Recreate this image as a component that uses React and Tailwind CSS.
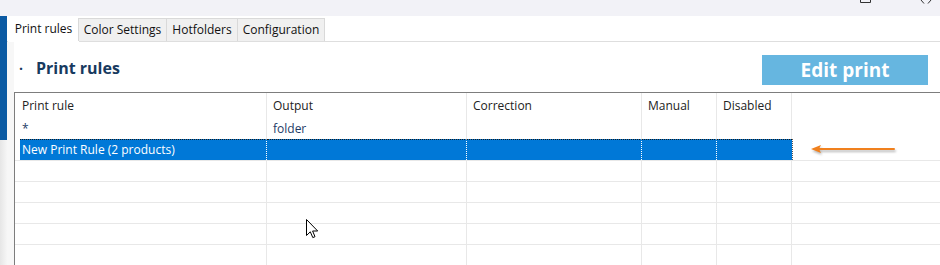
import React from 'react';

const tabs = [
  { label: 'Print rules', width: 'w-[71px]', active: true },
  { label: 'Color Settings', width: 'w-[89px]' },
  { label: 'Hotfolders', width: 'w-[72px]' },
  { label: 'Configuration', width: 'w-[88px]' },
];

const headers = ['Print rule', 'Output', 'Correction', 'Manual', 'Disabled', ''];

const gridCols = 'grid grid-cols-[252px_200px_175px_75px_75px_1fr]';

const Cursor = () => (
  <svg width="13" height="20" viewBox="0 0 13 20" className="absolute left-[306px] top-[219px]">
    <path
      d="M0.5 0.5 L0.5 16.5 L4.3 12.8 L6.8 18.6 L9 17.7 L6.6 12 L11.7 12 Z"
      fill="#fff"
      stroke="#000"
      strokeWidth="1"
    />
  </svg>
);

const Arrow = () => (
  <svg
    width="92"
    height="14"
    viewBox="0 0 92 14"
    className="absolute left-[809px] top-[142px] drop-shadow-[1px_2px_1px_rgba(0,0,0,0.28)]"
  >
    <line x1="9" y1="7" x2="85" y2="7" stroke="#f0801e" strokeWidth="2" strokeLinecap="round" />
    <path d="M2 7 L12 3 L10 7 L12 11 Z" fill="#f0801e" />
  </svg>
);

const App = () => {
  return (
    <div className="relative w-[940px] h-[265px] overflow-hidden bg-white font-['Open_Sans',sans-serif] text-[12px] text-[#222]">
      {/* Window chrome strip */}
      <div className="h-[16px] bg-[#f2f2f7] flex items-start justify-end">
        <svg width="12" height="4" viewBox="0 0 12 4" className="mr-[48px]">
          <path d="M0.5 0 L0.5 2.5 L10.5 2.5 L10.5 0" fill="none" stroke="#333" strokeWidth="1" />
        </svg>
        <svg width="12" height="5" viewBox="0 0 12 5" className="mr-[8px]">
          <path d="M1 0 L4 3.5 M11 0 L8 3.5" fill="none" stroke="#333" strokeWidth="1" />
        </svg>
      </div>

      <div className="flex h-[249px]">
        {/* Left rail */}
        <div className="w-[7px] flex flex-col">
          <div className="h-[124px] bg-[#0b5aa3]" />
          <div className="flex-1 bg-gradient-to-r from-[#e6e6e6] to-[#f6f6f6]" />
        </div>

        <div className="flex-1 flex flex-col">
          {/* Tabs */}
          <div className="h-[26px] flex items-end border-b border-[#dedede]">
            {tabs.map((tab) =>
              tab.active ? (
                <div
                  key={tab.label}
                  className={`${tab.width} ml-[1px] h-[26px] -mb-px bg-white flex items-center justify-center text-[#111]`}
                >
                  {tab.label}
                </div>
              ) : (
                <div
                  key={tab.label}
                  className={`${tab.width} h-[23px] bg-[#f0f0f0] border border-b-0 border-[#d9d9d9] -ml-px flex items-center justify-center text-[#111]`}
                >
                  {tab.label}
                </div>
              )
            )}
          </div>

          <div className="flex-1 flex">
            <div className="w-[7px] bg-[#f7f7f7]" />

            <div className="flex-1 flex flex-col">
              {/* Heading + button */}
              <div className="h-[50px] flex justify-between">
                <div className="flex items-center h-[52px] pl-[5px] gap-[13px] text-[#173a60]">
                  <span className="text-[14px] font-bold">·</span>
                  <span className="text-[16px] font-bold">Print rules</span>
                </div>
                <button className="mt-[13px] mr-[12px] w-[166px] h-[30px] bg-[#66b6e0] text-white text-[19px] font-bold leading-none">
                  Edit print
                </button>
              </div>

              {/* Table */}
              <div className="flex-1 border-l border-t border-[#7d7d7d]">
                <div className={`${gridCols} h-[25px]`}>
                  {headers.map((h, i) => (
                    <div
                      key={i}
                      className={`flex items-center ${i === 0 ? 'pl-[7px]' : 'pl-[6px]'} ${
                        i < 5 ? 'border-r border-[#e8e8e8]' : ''
                      }`}
                    >
                      {h}
                    </div>
                  ))}
                </div>

                <div className={`${gridCols} h-[21px] text-[#1d3b66]`}>
                  <div className="flex items-center pl-[7px] border-r border-[#e8e8e8]">*</div>
                  <div className="flex items-center pl-[6px] border-r border-[#e8e8e8]">folder</div>
                  <div className="border-r border-[#e8e8e8]" />
                  <div className="border-r border-[#e8e8e8]" />
                  <div className="border-r border-[#e8e8e8]" />
                  <div />
                </div>

                {/* Selected row */}
                <div className={`${gridCols} h-[21px]`}>
                  <div className="pl-[5px] flex">
                    <div className="flex-1 flex items-center pl-[2px] bg-[#0078d7] text-white border-t border-dotted border-[#1a1a1a] border-r border-r-white">
                      New Print Rule (2 products)
                    </div>
                  </div>
                  <div className="bg-[#0078d7] border-t border-dotted border-[#1a1a1a] border-r border-r-white" />
                  <div className="bg-[#0078d7] border-t border-dotted border-[#1a1a1a] border-r border-r-white" />
                  <div className="bg-[#0078d7] border-t border-dotted border-[#1a1a1a] border-r border-r-white" />
                  <div className="bg-[#0078d7] border-t border-dotted border-[#1a1a1a]" />
                  <div className="border-l border-dotted border-[#555]" />
                </div>

                {[0, 1, 2, 3, 4].map((r) => (
                  <div key={r} className={`${gridCols} h-[21px] border-t border-[#e8e8e8]`}>
                    <div className="border-r border-[#e8e8e8]" />
                    <div className="border-r border-[#e8e8e8]" />
                    <div className="border-r border-[#e8e8e8]" />
                    <div className="border-r border-[#e8e8e8]" />
                    <div className="border-r border-[#e8e8e8]" />
                    <div />
                  </div>
                ))}
              </div>
            </div>
          </div>
        </div>
      </div>

      <Arrow />
      <Cursor />
    </div>
  );
};

export default App;
